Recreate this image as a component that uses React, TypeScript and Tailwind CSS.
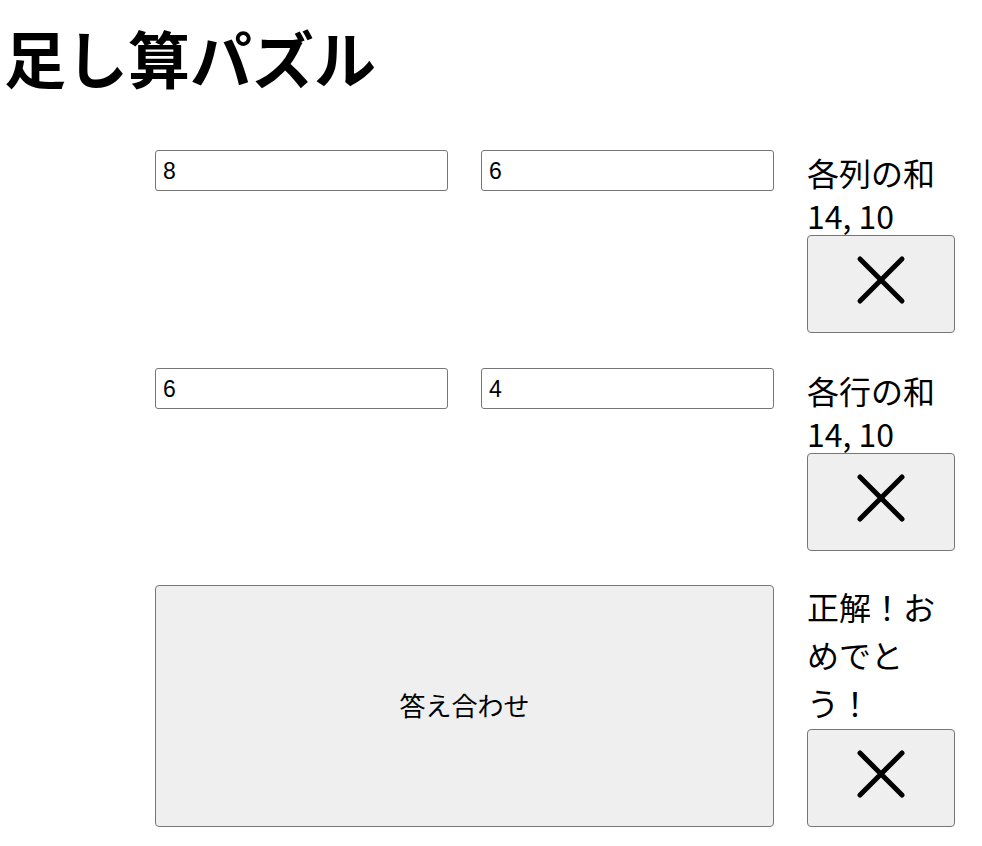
import React from "react";

const jp = { fontFamily: '"Noto Sans CJK JP", "Noto Sans", sans-serif' };

function XButton() {
  return (
    <button
      type="button"
      className="flex h-[98px] w-[148px] items-center justify-center rounded-[4px] border border-[#767676] bg-[#efefef]"
    >
      <svg width="50" height="50" viewBox="0 0 50 50" className="mb-[8px]">
        <path d="M4 4 L46 46 M46 4 L4 46" stroke="#000" strokeWidth="5" strokeLinecap="round" fill="none" />
      </svg>
    </button>
  );
}

function NumInput({ value }: { value: string }) {
  return (
    <div className="flex h-[41px] w-[293px] items-center rounded-[3px] border border-[#767676] bg-white px-[7px]">
      <input
        type="text"
        defaultValue={value}
        className="w-full bg-transparent text-[23px] leading-[26px] text-black outline-none"
        style={{ fontFamily: '"Liberation Sans", Arial, sans-serif' }}
      />
    </div>
  );
}

function SumCell({ label, value }: { label: string; value: string }) {
  return (
    <div className="flex w-[148px] flex-col" style={jp}>
      <div className="h-[48px] text-[32px] leading-[44px] text-black">{label}</div>
      <div className="h-[37px] text-[32px] leading-[35px] text-black">{value}</div>
      <XButton />
    </div>
  );
}

export default function App() {
  return (
    <div className="min-h-[846px] w-[982px] bg-white text-black" style={jp}>
      <h1 className="pl-[4px] pt-[26px] text-[62px] font-bold leading-[62px]">足し算パズル</h1>
      <div className="mt-[62px] flex flex-col pl-[155px]">
        <div className="flex items-start gap-[33px]">
          <NumInput value="8" />
          <NumInput value="6" />
          <SumCell label="各列の和" value="14, 10" />
        </div>
        <div className="mt-[35px] flex items-start gap-[33px]">
          <NumInput value="6" />
          <NumInput value="4" />
          <SumCell label="各行の和" value="14, 10" />
        </div>
        <div className="mt-[34px] flex items-start gap-[33px]">
          <button
            type="button"
            className="h-[242px] w-[619px] rounded-[4px] border border-[#767676] bg-[#efefef] pb-[4px] text-[26px] text-black"
            style={jp}
          >
            答え合わせ
          </button>
          <div className="flex w-[148px] flex-col">
            <div className="h-[144px] text-[32px] leading-[48px] text-black">
              <div className="-mt-[3px]">正解！おめでとう！</div>
            </div>
            <XButton />
          </div>
        </div>
      </div>
    </div>
  );
}
